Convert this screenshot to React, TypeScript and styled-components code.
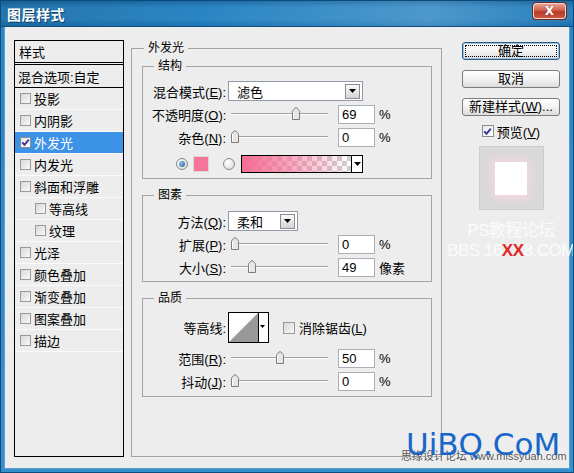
import React from "react";
import styled, { createGlobalStyle } from "styled-components";

const GlobalStyle = createGlobalStyle`
  html, body {
    margin: 0;
    padding: 0;
    background: #ededed;
  }
  body {
    font-family: "Liberation Sans", "Noto Sans CJK SC", sans-serif;
    font-size: 13px;
    color: #000;
  }
  * {
    box-sizing: border-box;
  }
`;

const Window = styled.div`
  position: relative;
  width: 574px;
  height: 473px;
  display: flex;
  flex-direction: column;
  overflow: hidden;
  background: linear-gradient(180deg, #2a86c4, #3590cb);
  border: 1px solid #0c4c7e;
  border-top: none;
`;

const TitleBar = styled.div`
  height: 27px;
  flex: none;
  display: flex;
  align-items: center;
  justify-content: space-between;
  padding: 0 7px 0 6px;
  border-top: 1px solid #0a4a7c;
  border-bottom: 1px solid #0d4f82;
  background: linear-gradient(
      90deg,
      rgba(0, 0, 0, 0.12),
      rgba(255, 255, 255, 0) 35%,
      rgba(255, 255, 255, 0.16) 75%,
      rgba(0, 0, 0, 0.04)
    ),
    linear-gradient(180deg, #1b6aa5 0%, #2a84c2 25%, #2b86c4 70%, #1f74b3 100%);
`;

const Title = styled.span`
  color: #fff;
  font-size: 14px;
  font-weight: bold;
  letter-spacing: 0.5px;
  text-shadow: 1px 1px 0 #0d4470;
`;

const CloseButton = styled.div`
  align-self: flex-start;
  margin-top: 2px;
  width: 33px;
  height: 16px;
  display: flex;
  align-items: center;
  justify-content: center;
  border: 1px solid #f2d6d0;
  border-radius: 3px;
  background: linear-gradient(180deg, #e8a293 0%, #d0604d 45%, #b63a27 55%, #c95845 100%);
  box-shadow: 0 0 0 1px #6b2a1e;
  color: #fff;
  font-family: "DejaVu Sans", sans-serif;
  font-weight: bold;
  font-size: 12px;
  line-height: 1;
  text-shadow: 0 0 1px #6b2a1e;
`;

const Body = styled.div`
  flex: 1;
  margin: 0 3px 3px;
  display: flex;
  align-items: stretch;
  padding: 13px 11px 11px 9px;
  background: #ededed;
  border: 1px solid #5b9fd0;
  border-top: none;
`;

/* ---------- left list ---------- */

const StyleList = styled.div`
  width: 110px;
  flex: none;
  display: flex;
  flex-direction: column;
  border: 1px solid #000;
  background: #ededed;
`;

const ListHeader = styled.div`
  height: 24px;
  padding-left: 4px;
  display: flex;
  align-items: center;
  border-bottom: 3px double #000;
`;

const BlendRow = styled.div`
  height: 23px;
  padding-left: 3px;
  display: flex;
  align-items: center;
  border-bottom: 1px solid #000;
`;

const ListItem = styled.div<{ $selected?: boolean; $indent?: boolean }>`
  height: 22px;
  flex: none;
  display: flex;
  align-items: center;
  gap: 3px;
  padding-left: ${(p) => (p.$indent ? 20 : 5)}px;
  border-bottom: 1px solid #fbfbfb;
  background: ${(p) => (p.$selected ? "#3c92e6" : "transparent")};
  color: ${(p) => (p.$selected ? "#fff" : "#000")};
`;

const Box = styled.span<{ $size?: number }>`
  width: ${(p) => p.$size ?? 11}px;
  height: ${(p) => p.$size ?? 11}px;
  flex: none;
  display: inline-flex;
  align-items: center;
  justify-content: center;
  border: 1px solid #9a9a9a;
  background: linear-gradient(135deg, #d8d8d8, #f8f8f8);
`;

const CheckedBox = styled(Box)`
  border-color: #8c8c8c;
  background: linear-gradient(135deg, #e6e6ee, #ffffff);
`;

const CheckBox = ({ checked, size }: { checked?: boolean; size?: number }) =>
  checked ? (
    <CheckedBox $size={size}>
      <svg width="9" height="9" viewBox="0 0 9 9">
        <path d="M1.2 4.4 L3.5 6.8 L7.8 1.6" fill="none" stroke="#3b3a96" strokeWidth="2" />
      </svg>
    </CheckedBox>
  ) : (
    <Box $size={size} />
  );

/* ---------- group boxes ---------- */

const Group = styled.fieldset<{ $pad?: string }>`
  margin: 0;
  min-width: 0;
  border: 1px solid #a4a4a4;
  padding: ${(p) => p.$pad ?? "7px 8px 4px 9px"};
  & + & {
    margin-top: 8px;
  }
`;

const OuterGroup = styled.fieldset`
  margin: 0 0 0 7px;
  min-width: 0;
  width: 311px;
  flex: none;
  border: 1px solid #a4a4a4;
  padding: 2px 9px 0 10px;
  display: flex;
  flex-direction: column;
`;

const Legend = styled.legend`
  margin-left: 2px;
  padding: 0 4px;
  font-size: 12px;
  line-height: 16px;
`;

const Rows = styled.div`
  display: flex;
  flex-direction: column;
  gap: 3px;
`;

const Row = styled.div<{ $h?: number; $lead?: number; $top?: number }>`
  height: ${(p) => p.$h ?? 20}px;
  display: flex;
  align-items: center;
  padding-left: ${(p) => p.$lead ?? 0}px;
  margin-top: ${(p) => p.$top ?? 0}px;
`;

const Label = styled.span`
  width: 74px;
  flex: none;
  margin-right: 2px;
  text-align: right;
  white-space: nowrap;
`;

const Select = styled.div<{ $w: number }>`
  width: ${(p) => p.$w}px;
  height: 20px;
  display: flex;
  align-items: center;
  justify-content: space-between;
  padding: 0 2px 0 8px;
  border: 1px solid #8f9aa6;
  background: #fff;
`;

const DropButton = styled.span`
  width: 15px;
  height: 15px;
  display: flex;
  align-items: center;
  justify-content: center;
  border: 1px solid #8d8d8d;
  background: linear-gradient(180deg, #fafafa, #d4d4d4);
`;

const Arrow = () => (
  <svg width="7" height="4" viewBox="0 0 7 4">
    <path d="M0 0 H7 L3.5 4 Z" fill="#000" />
  </svg>
);

const SliderWrap = styled.div`
  position: relative;
  width: 97px;
  height: 20px;
  margin-left: 3px;
`;

const Track = styled.div`
  position: absolute;
  left: 0;
  right: 0;
  top: 9px;
  height: 2px;
  border-top: 1px solid #a2a2a2;
  border-bottom: 1px solid #fff;
`;

const Thumb = styled.svg`
  position: absolute;
  top: 3px;
`;

const Slider = ({ value, max = 100 }: { value: number; max?: number }) => (
  <SliderWrap>
    <Track />
    <Thumb
      width="8"
      height="13"
      viewBox="0 0 8 13"
      style={{ left: Math.round((value / max) * 89) }}
    >
      <path
        d="M0.5 12.5 V4.5 Q0.5 3.5 1.5 2.5 L4 0.5 L6.5 2.5 Q7.5 3.5 7.5 4.5 V12.5 Z"
        fill="#e6e6e6"
        stroke="#7c7c7c"
      />
      <path d="M1.5 5 V11.5" stroke="#fff" />
    </Thumb>
  </SliderWrap>
);

const NumberBox = styled.div`
  width: 37px;
  height: 19px;
  margin-left: 10px;
  padding-left: 3px;
  display: flex;
  align-items: center;
  border: 1px solid #a9afb6;
  background: #fff;
`;

const Unit = styled.span`
  margin-left: 4px;
`;

const Radio = styled.span<{ $on?: boolean }>`
  width: 12px;
  height: 12px;
  flex: none;
  border-radius: 50%;
  border: 1px solid #8a8a8a;
  background: radial-gradient(circle at 35% 35%, #ffffff, #d6d6d6);
  display: flex;
  align-items: center;
  justify-content: center;
  &::after {
    content: "";
    width: 6px;
    height: 6px;
    border-radius: 50%;
    display: ${(p) => (p.$on ? "block" : "none")};
    background: radial-gradient(circle at 35% 35%, #8fc0ec, #1f5794);
  }
`;

const Swatch = styled.span`
  width: 16px;
  height: 16px;
  margin-left: 5px;
  flex: none;
  background: #f6739a;
  border: 1px solid #d7d7d7;
`;

const GradientBox = styled.div`
  width: 122px;
  height: 18px;
  margin-left: 6px;
  display: flex;
  border: 1px solid #000;
  background: #fff;
`;

const GradientFill = styled.div`
  flex: 1;
  background: linear-gradient(90deg, #f56c94 0%, rgba(245, 108, 148, 0.6) 45%, rgba(245, 108, 148, 0) 100%),
    conic-gradient(#cfcfcf 25%, #ffffff 0 50%, #cfcfcf 0 75%, #ffffff 0) 0 0 / 10px 10px;
  border-right: 1px solid #000;
`;

const GradientArrow = styled.div`
  width: 10px;
  display: flex;
  align-items: center;
  justify-content: center;
`;

const ContourBox = styled.div`
  width: 41px;
  height: 31px;
  flex: none;
  border: 1px solid #000;
  background: #fff;
  display: flex;
`;

const Check = styled.span`
  margin-left: 14px;
  display: flex;
  align-items: center;
  gap: 4px;
`;

/* ---------- right column ---------- */

const Side = styled.div`
  width: 98px;
  margin-left: 20px;
  flex: none;
  display: flex;
  flex-direction: column;
  align-items: center;
  padding-top: 2px;
`;

const Button = styled.button<{ $default?: boolean }>`
  width: 98px;
  height: 18px;
  padding: 0;
  margin: 0 0 10px;
  font: inherit;
  font-size: 13px;
  line-height: 14px;
  color: #000;
  border: 1px solid ${(p) => (p.$default ? "#2c5c86" : "#7c7c7c")};
  border-radius: 3px;
  background: linear-gradient(180deg, #ffffff 0%, #f3f3f3 50%, #dcdcdc 100%);
  box-shadow: ${(p) => (p.$default ? "inset 0 0 0 1px #9cc0de" : "none")};
  outline: ${(p) => (p.$default ? "1px dotted #000" : "none")};
  outline-offset: -4px;
`;

const PreviewCheck = styled.div`
  margin-top: -3px;
  height: 16px;
  display: flex;
  align-items: center;
  gap: 3px;
`;

const Preview = styled.div`
  margin-top: 7px;
  width: 65px;
  height: 64px;
  display: flex;
  align-items: center;
  justify-content: center;
  background: #d9d9d9;
  border: 1px solid #cdcdcd;
`;

const PreviewLayer = styled.div`
  width: 32px;
  height: 33px;
  background: #fff;
  box-shadow: 0 0 9px 3px rgba(250, 215, 222, 0.9);
`;

const Faint = styled.div<{ $size: number }>`
  font-size: ${(p) => p.$size}px;
  line-height: ${(p) => p.$size + 3}px;
  color: #fbfbfb;
  white-space: nowrap;
  letter-spacing: -0.5px;
`;

const Red = styled.span`
  color: #e2262b;
  font-weight: bold;
`;

const FaintTop = styled(Faint)`
  margin-top: 11px;
`;

/* ---------- watermark overlay ---------- */

const Logo = styled.div`
  position: absolute;
  left: 405px;
  top: 429px;
  font-family: "DejaVu Sans", sans-serif;
  font-size: 31px;
  line-height: 31px;
  color: #1766c9;
  white-space: nowrap;
`;

const LogoSub = styled.div`
  position: absolute;
  left: 400px;
  top: 450px;
  font-size: 11px;
  line-height: 13px;
  color: #555;
  white-space: nowrap;
  text-shadow: 1px 0 0 #fff;
`;

const listItems = [
  { label: "投影" },
  { label: "内阴影" },
  { label: "外发光", checked: true, selected: true },
  { label: "内发光" },
  { label: "斜面和浮雕" },
  { label: "等高线", indent: true },
  { label: "纹理", indent: true },
  { label: "光泽" },
  { label: "颜色叠加" },
  { label: "渐变叠加" },
  { label: "图案叠加" },
  { label: "描边" },
];

export default function App() {
  return (
    <>
      <GlobalStyle />
      <Window>
        <TitleBar>
          <Title>图层样式</Title>
          <CloseButton>X</CloseButton>
        </TitleBar>
        <Body>
          <StyleList>
            <ListHeader>样式</ListHeader>
            <BlendRow>混合选项:自定</BlendRow>
            {listItems.map((it) => (
              <ListItem key={it.label} $selected={it.selected} $indent={it.indent}>
                <CheckBox checked={it.checked} />
                {it.label}
              </ListItem>
            ))}
          </StyleList>

          <OuterGroup>
            <Legend>外发光</Legend>
            <Group>
              <Legend>结构</Legend>
              <Rows>
                <Row>
                  <Label>
                    混合模式(<u>E</u>):
                  </Label>
                  <Select $w={135}>
                    滤色
                    <DropButton>
                      <Arrow />
                    </DropButton>
                  </Select>
                </Row>
                <Row>
                  <Label>
                    不透明度(<u>O</u>):
                  </Label>
                  <Slider value={69} />
                  <NumberBox>69</NumberBox>
                  <Unit>%</Unit>
                </Row>
                <Row>
                  <Label>
                    杂色(<u>N</u>):
                  </Label>
                  <Slider value={0} />
                  <NumberBox>0</NumberBox>
                  <Unit>%</Unit>
                </Row>
                <Row $lead={24} $top={4}>
                  <Radio $on />
                  <Swatch />
                  <Radio style={{ marginLeft: 14 }} />
                  <GradientBox>
                    <GradientFill />
                    <GradientArrow>
                      <Arrow />
                    </GradientArrow>
                  </GradientBox>
                </Row>
              </Rows>
            </Group>

            <Group $pad="8px 8px 4px 9px">
              <Legend>图素</Legend>
              <Rows>
                <Row>
                  <Label>
                    方法(<u>Q</u>):
                  </Label>
                  <Select $w={70}>
                    柔和
                    <DropButton>
                      <Arrow />
                    </DropButton>
                  </Select>
                </Row>
                <Row>
                  <Label>
                    扩展(<u>P</u>):
                  </Label>
                  <Slider value={0} />
                  <NumberBox>0</NumberBox>
                  <Unit>%</Unit>
                </Row>
                <Row>
                  <Label>
                    大小(<u>S</u>):
                  </Label>
                  <Slider value={49} max={250} />
                  <NumberBox>49</NumberBox>
                  <Unit>像素</Unit>
                </Row>
              </Rows>
            </Group>

            <Group $pad="6px 8px 5px 9px">
              <Legend>品质</Legend>
              <Rows>
                <Row $h={31}>
                  <Label>等高线:</Label>
                  <ContourBox>
                    <svg width="39" height="29" viewBox="0 0 39 29">
                      <path d="M0 29 L29 0 V29 Z" fill="#999" />
                      <path d="M29.5 0 V29" stroke="#000" />
                      <path d="M31 12 H36 L33.5 15 Z" fill="#000" />
                    </svg>
                  </ContourBox>
                  <Check>
                    <CheckBox size={12} />
                    <span>
                      消除锯齿(<u>L</u>)
                    </span>
                  </Check>
                </Row>
                <Row $top={2}>
                  <Label>
                    范围(<u>R</u>):
                  </Label>
                  <Slider value={50} />
                  <NumberBox>50</NumberBox>
                  <Unit>%</Unit>
                </Row>
                <Row>
                  <Label>
                    抖动(<u>J</u>):
                  </Label>
                  <Slider value={0} />
                  <NumberBox>0</NumberBox>
                  <Unit>%</Unit>
                </Row>
              </Rows>
            </Group>
          </OuterGroup>

          <Side>
            <Button $default>确定</Button>
            <Button>取消</Button>
            <Button>
              新建样式(<u>W</u>)...
            </Button>
            <PreviewCheck>
              <CheckBox checked size={12} />
              <span>
                预览(<u>V</u>)
              </span>
            </PreviewCheck>
            <Preview>
              <PreviewLayer />
            </Preview>
            <FaintTop $size={17}>PS教程论坛</FaintTop>
            <Faint $size={17}>
              BBS 16<Red>XX</Red>8.COM
            </Faint>
          </Side>
        </Body>
        <LogoSub>思缘设计论坛 www.missyuan.com</LogoSub>
        <Logo>UiBQ.CoM</Logo>
      </Window>
    </>
  );
}
